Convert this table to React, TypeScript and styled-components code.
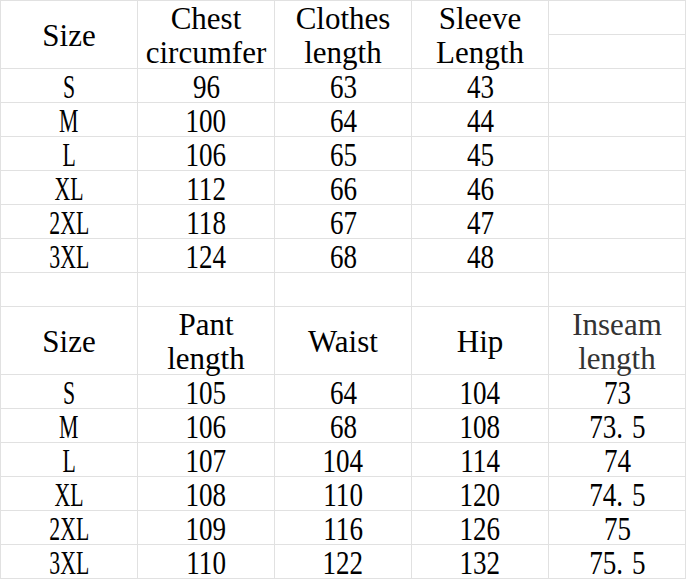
import React from "react";
import styled, { createGlobalStyle } from "styled-components";

const GlobalStyle = createGlobalStyle`
  html, body {
    margin: 0;
    padding: 0;
    background: #ffffff;
  }
`;

const Sheet = styled.div`
  display: grid;
  grid-template-columns: repeat(5, 137px);
  grid-auto-rows: 34px;
  width: max-content;
  border-left: 1px solid #e1e1e1;
  border-top: 1px solid #e1e1e1;
  font-family: "Liberation Serif", "Times New Roman", serif;
  color: #000000;
`;

const Cell = styled.div<{ $rows?: number }>`
  grid-row: span ${(p) => p.$rows ?? 1};
  box-sizing: border-box;
  border-right: 1px solid #e1e1e1;
  border-bottom: 1px solid #e1e1e1;
  display: flex;
  flex-direction: column;
  align-items: center;
  justify-content: center;
  padding-top: 2px;
`;

const HeaderLine = styled.span<{ $muted?: boolean }>`
  display: block;
  font-family: "Liberation Serif", "Times New Roman", serif;
  font-size: 31px;
  line-height: 34px;
  white-space: nowrap;
  color: ${(p) => (p.$muted ? "#333333" : "#000000")};
`;

const Value = styled.span<{ $squeeze: number }>`
  display: inline-block;
  font-family: "Liberation Serif", "Times New Roman", serif;
  font-size: 33px;
  line-height: 32px;
  white-space: nowrap;
  transform: scaleX(${(p) => p.$squeeze});
  transform-origin: center;
`;

const Dot = styled.span`
  margin-right: 11px;
`;

type Row = [string, ...string[]];

const topRows: Row[] = [
  ["S", "96", "63", "43"],
  ["M", "100", "64", "44"],
  ["L", "106", "65", "45"],
  ["XL", "112", "66", "46"],
  ["2XL", "118", "67", "47"],
  ["3XL", "124", "68", "48"],
];

const bottomRows: Row[] = [
  ["S", "105", "64", "104", "73"],
  ["M", "106", "68", "108", "73.5"],
  ["L", "107", "104", "114", "74"],
  ["XL", "108", "110", "120", "74.5"],
  ["2XL", "109", "116", "126", "75"],
  ["3XL", "110", "122", "132", "75.5"],
];

function Num({ text }: { text: string }) {
  const parts = text.split(".");
  return (
    <Value $squeeze={0.82}>
      {parts.length === 2 ? (
        <>
          {parts[0]}
          <Dot>.</Dot>
          {parts[1]}
        </>
      ) : (
        text
      )}
    </Value>
  );
}

function DataRow({ row, cols }: { row: Row; cols: number }) {
  const cells = [];
  for (let i = 0; i < cols; i++) {
    const v = row[i];
    cells.push(
      <Cell key={i}>
        {v === undefined ? null : i === 0 ? (
          <Value $squeeze={0.66}>{v}</Value>
        ) : (
          <Num text={v} />
        )}
      </Cell>
    );
  }
  return <>{cells}</>;
}

function Header({ lines, muted }: { lines: string[]; muted?: boolean }) {
  return (
    <Cell $rows={2}>
      {lines.map((l) => (
        <HeaderLine key={l} $muted={muted}>
          {l}
        </HeaderLine>
      ))}
    </Cell>
  );
}

export default function App() {
  return (
    <>
      <GlobalStyle />
      <Sheet>
        <Header lines={["Size"]} />
        <Header lines={["Chest", "circumfer"]} />
        <Header lines={["Clothes", "length"]} />
        <Header lines={["Sleeve", "Length"]} />
        <Cell />
        <Cell />
        {topRows.map((r) => (
          <DataRow key={"t" + r[0]} row={r} cols={5} />
        ))}
        <Cell />
        <Cell />
        <Cell />
        <Cell />
        <Cell />
        <Header lines={["Size"]} />
        <Header lines={["Pant", "length"]} />
        <Header lines={["Waist"]} />
        <Header lines={["Hip"]} />
        <Header lines={["Inseam", "length"]} muted />
        {bottomRows.map((r) => (
          <DataRow key={"b" + r[0]} row={r} cols={5} />
        ))}
      </Sheet>
    </>
  );
}
